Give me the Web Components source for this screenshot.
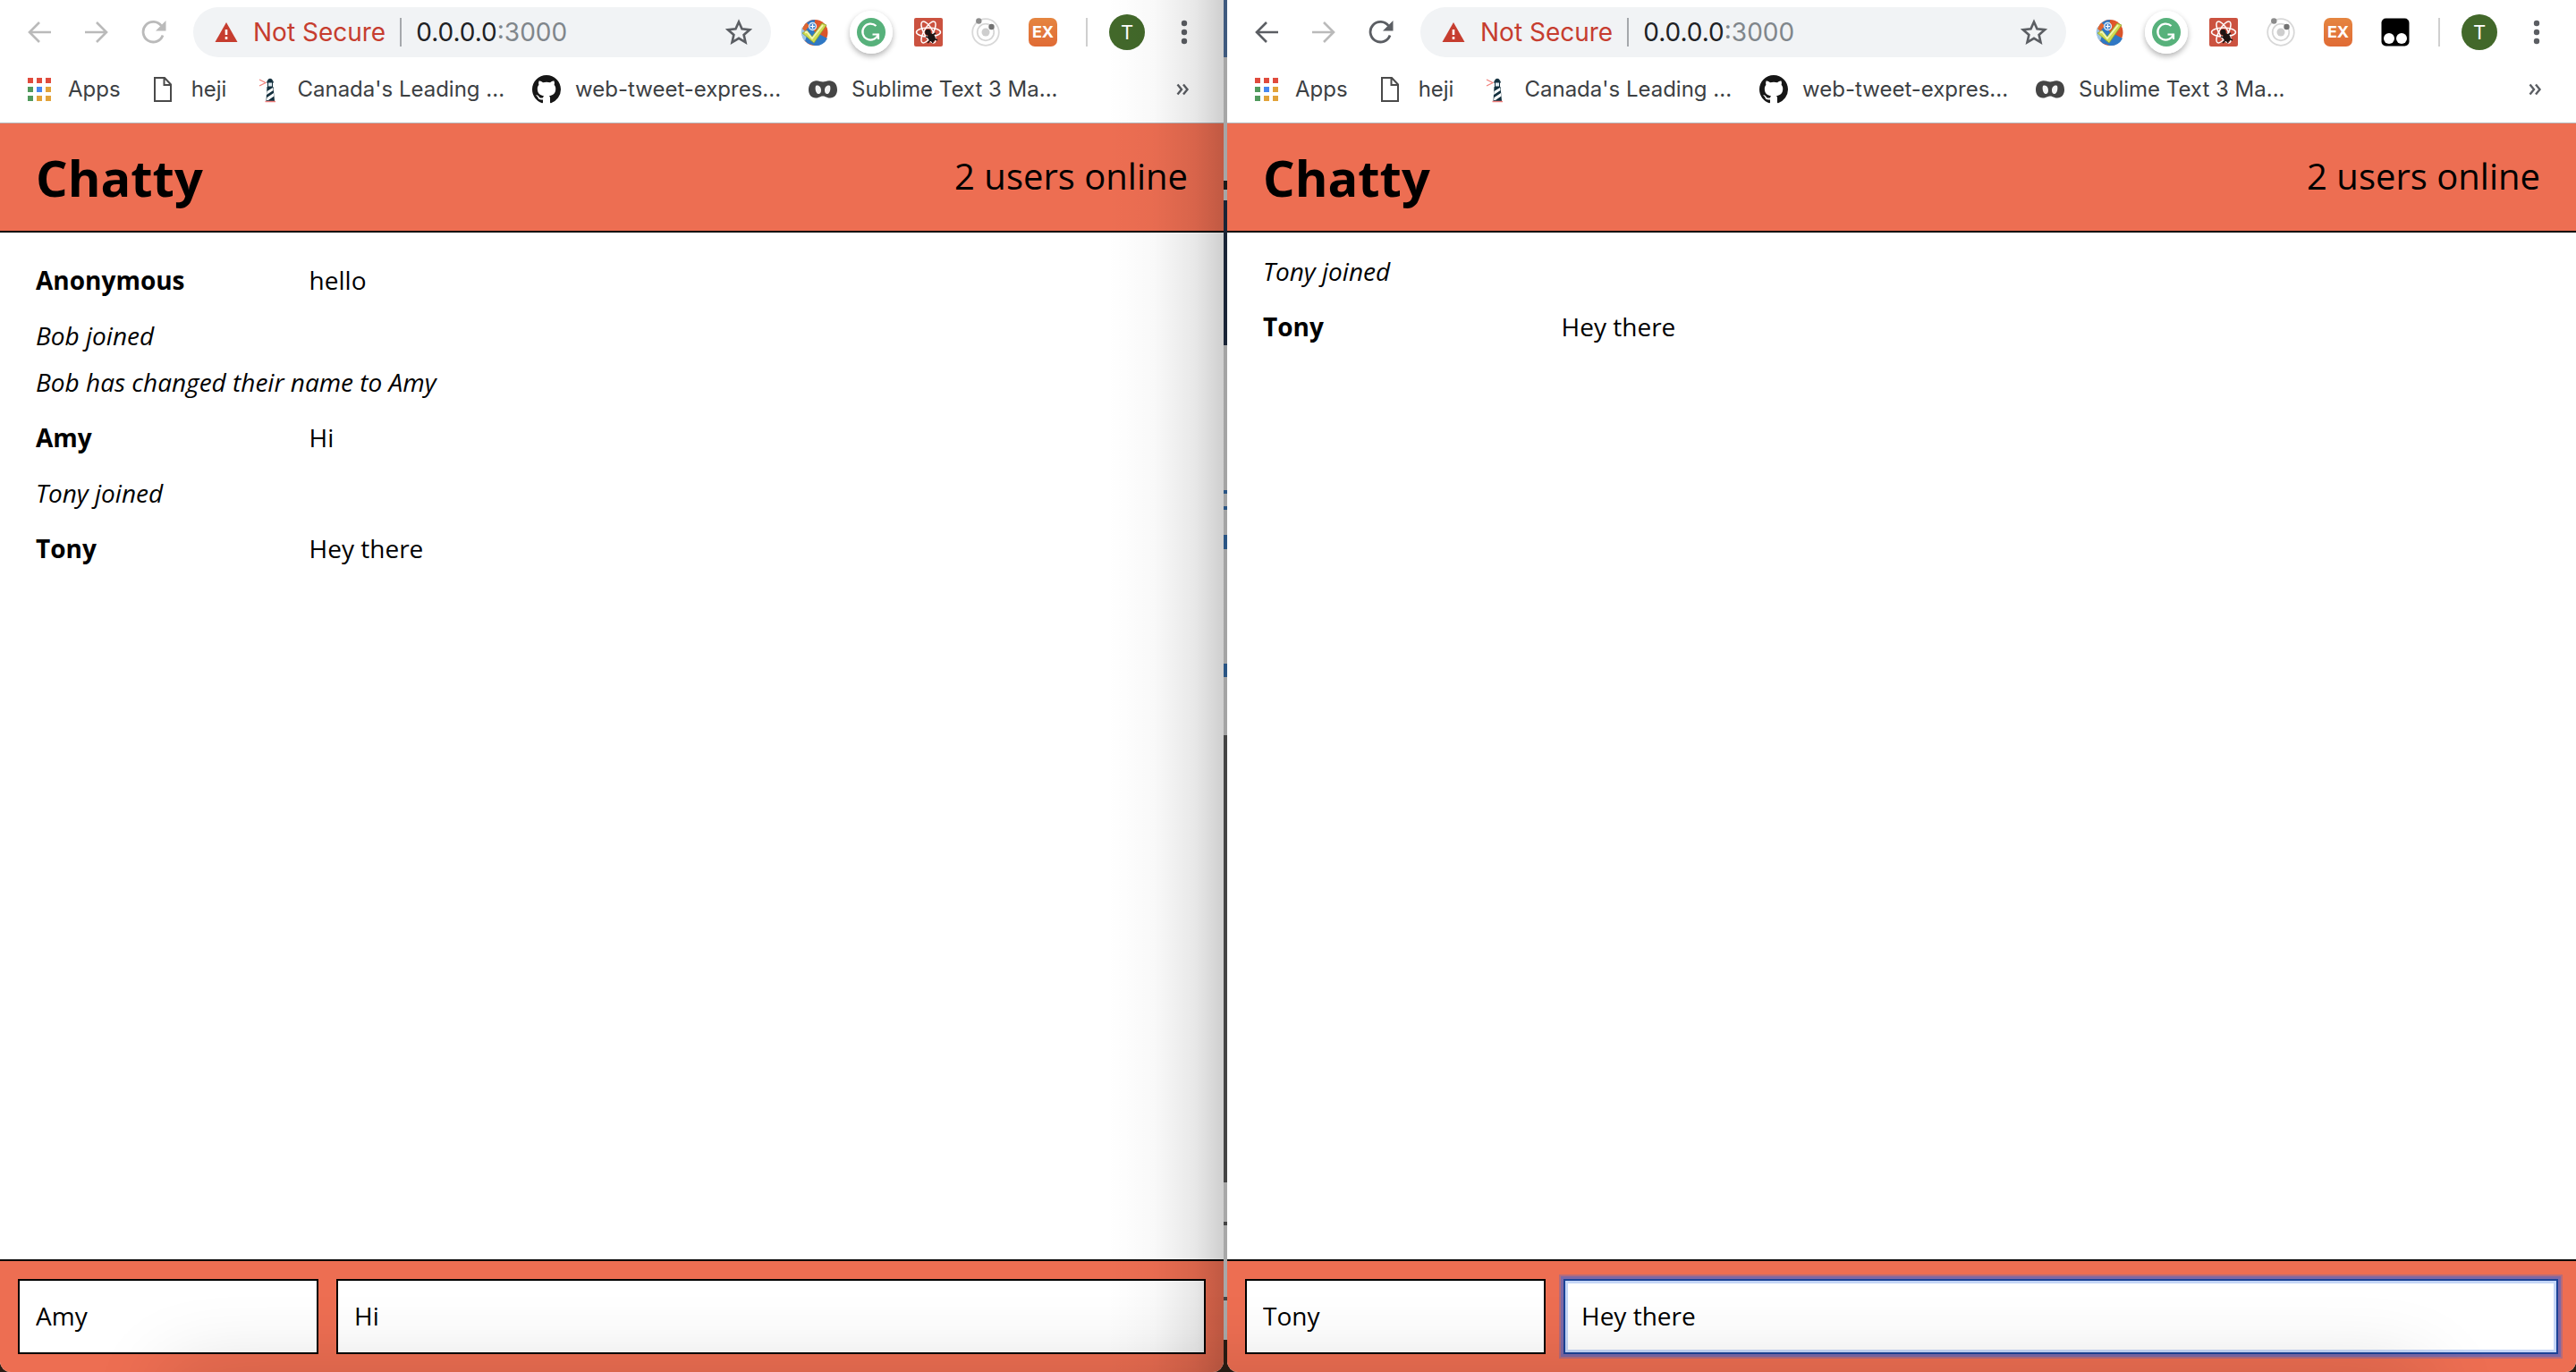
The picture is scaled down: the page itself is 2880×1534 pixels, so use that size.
<!DOCTYPE html>
<html lang="en">
<head>
<meta charset="utf-8">
<title>Chatty</title>
<style>
  html, body { height: 100%; margin: 0; }
  body { overflow: hidden; background: #2a1c14; }
</style>
</head>
<body>
<chat-desktop>
  <browser-window width-share="1368">
    <browser-toolbar slot="toolbar"></browser-toolbar>
    <bookmarks-bar slot="toolbar"></bookmarks-bar>
    <chat-app user="Amy" draft="Hi">
      <chat-message author="Anonymous">hello</chat-message>
      <chat-notice>Bob joined</chat-notice>
      <chat-notice>Bob has changed their name to Amy</chat-notice>
      <chat-message author="Amy">Hi</chat-message>
      <chat-notice>Tony joined</chat-notice>
      <chat-message author="Tony">Hey there</chat-message>
    </chat-app>
  </browser-window>
  <browser-window width-share="1508">
    <browser-toolbar slot="toolbar" active extra></browser-toolbar>
    <bookmarks-bar slot="toolbar"></bookmarks-bar>
    <chat-app user="Tony" draft="Hey there" typing>
      <chat-notice>Tony joined</chat-notice>
      <chat-message author="Tony">Hey there</chat-message>
    </chat-app>
  </browser-window>
</chat-desktop>

<script>
const ICONS = {
  back: [28, 28, '<path d="M27 14H3M14 3 3 14l11 11" fill="none" stroke="currentColor" stroke-width="2.6"/>'],
  forward: [28, 28, '<path d="M1 14h24M14 3l11 11-11 11" fill="none" stroke="currentColor" stroke-width="2.6"/>'],
  reload: [28, 28, '<path d="M24 17.500A11.300 11.300 0 1 1 22.500 7" fill="none" stroke="currentColor" stroke-width="2.800"/><path d="M27.500 1v11.500H16z" fill="currentColor"/>'],
  warning: [26, 24, '<path d="M13 1 25.500 23H.5z" fill="#c63d2f"/><path d="M11.700 9h2.600v6h-2.600zM11.700 17h2.600v3h-2.600z" fill="#fff"/>'],
  star: [30, 30, '<path d="m15 3.500 3.500 7.900 8.600.8-6.500 5.700 1.900 8.400L15 21.800l-7.500 4.500 1.900-8.400-6.500-5.700 8.600-.8z" fill="none" stroke="#5b5e63" stroke-width="2.600"/>'],
  check: [32, 32, '<circle cx="17" cy="16.500" r="14.500" fill="#d9542a"/><path d="M17 2a14.500 14.500 0 0 0-8 26.500L17 31a14 14 0 0 0 14-8L16 15z" fill="#2f78c4"/><path d="M21 2.800A14.500 14.500 0 0 1 31 13l-8 3-6-6z" fill="#e2572b"/><path d="M3 10a14 14 0 0 0 3 16l3-9z" fill="#9bc5e6"/><path d="M8 5.500A14.500 14.500 0 0 0 3 12l3 3 5-6z" fill="#e0652f"/><circle cx="14.500" cy="9.500" r="4" fill="#4f8bd0" stroke="#dbe9f6" stroke-width="1.400"/><path d="M14.500 7v5M12 9.500h5" stroke="#fff" stroke-width="1.200"/><path d="m3 17 5-3 6 7L25 6l5 2-14 20z" fill="#cfdc52" stroke="#8ba32f" stroke-width=".8"/><path d="m6 16.500 2-1 6 7.500L26 8" fill="none" stroke="#f0f5b4" stroke-width="2"/>'],
  grammarly: [48, 48, '<circle cx="24" cy="24" r="24" fill="#fff"/><circle cx="24" cy="24" r="16" fill="#57b17b"/><path d="M29.500 17A9 9 0 1 0 32 26" fill="none" stroke="#fff" stroke-width="2.300"/><path d="M25.500 26.500H32V32" fill="none" stroke="#fff" stroke-width="2.200"/>'],
  react: [32, 32, '<rect width="32" height="32" rx="2" fill="#cb5240"/><g fill="none" stroke="#fff" stroke-width="1.500"><ellipse cx="16" cy="16" rx="13.500" ry="5"/><ellipse cx="16" cy="16" rx="13.500" ry="5" transform="rotate(60 16 16)"/><ellipse cx="16" cy="16" rx="13.500" ry="5" transform="rotate(120 16 16)"/></g><circle cx="15.500" cy="16" r="3.300" fill="#1c1413"/><ellipse cx="19.500" cy="22" rx="4" ry="5" transform="rotate(-35 19.500 22)" fill="#1c1413"/><path d="m13 21 4 1m-2 6 3-3m3 3-1-3m6 0-4-2m2-6-3 2m-5-1 1 3" stroke="#1c1413" stroke-width="1.700"/>'],
  orbit: [32, 32, '<circle cx="16" cy="16" r="14.800" fill="none" stroke="#d8d8d8" stroke-width="1.800"/><circle cx="16" cy="16" r="9.300" fill="none" stroke="#d5d5d5" stroke-width="1.800"/><circle cx="16" cy="16" r="4.500" fill="#cecece"/><circle cx="8.300" cy="3.500" r="3.200" fill="#8c8c8c"/><circle cx="22.500" cy="10" r="3.200" fill="#737373"/>'],
  tamper: [32, 32, '<rect x=".5" y=".5" width="31" height="31" rx="5" fill="#000"/><circle cx="9" cy="23" r="6" fill="#fff"/><circle cx="23" cy="23" r="6" fill="#fff"/>'],
  dots: [8, 28, '<g fill="#5b5e63"><circle cx="4" cy="4" r="3.200"/><circle cx="4" cy="14" r="3.200"/><circle cx="4" cy="24" r="3.200"/></g>'],
  apps: [32, 32, '<g transform="translate(3 3)"><path d="M0 0h6v6H0zM10 0h6v6h-6zM20 0h6v6h-6z" fill="#e04b3d"/><path d="M0 10h6v6H0zM0 20h6v6H0z" fill="#519a5d"/><path d="M10 10h6v6h-6z" fill="#4688f1"/><path d="M20 10h6v6h-6zM10 20h6v6h-6zM20 20h6v6h-6z" fill="#e2a33a"/></g>'],
  file: [32, 32, '<path d="M7 3h11l7 7.500V29H7zM17.500 3v8H25" fill="none" stroke="#4a4a4a" stroke-width="2"/>'],
  lighthouse: [32, 32, '<path d="m6 5 7 3.500L6 12" fill="none" stroke="#f0807a" stroke-width="1.200"/><path d="M14 8h8M15 8c0-5 6-5 6 0" fill="#14303e" stroke="#14303e"/><path d="M15.500 8h5v5h-5z" fill="#dfeaf0" stroke="#14303e"/><path d="M14.500 13h7L23 29h-9.500z" fill="#14303e"/><path d="m14.500 18 6.500-4 .5 3-7.500 5zm0 7 7.500-5 .4 3.500L16 28l-2 0z" fill="#fff"/><path d="M12.500 29.500H24" stroke="#ef7f7c" stroke-width="1.500"/>'],
  github: [32, 32, '<path transform="scale(2)" fill="#161616" d="M8 0C3.580 0 0 3.580 0 8c0 3.540 2.290 6.530 5.470 7.590.4.070.55-.17.55-.38 0-.19-.01-.82-.01-1.490-2.010.37-2.530-.49-2.690-.94-.09-.23-.48-.94-.82-1.130-.28-.15-.68-.52-.01-.53.63-.01 1.080.58 1.230.82.72 1.210 1.870.87 2.330.66.07-.52.28-.87.51-1.070-1.780-.2-3.640-.89-3.640-3.950 0-.87.31-1.590.82-2.150-.08-.2-.36-1.020.08-2.120 0 0 .67-.21 2.200.82.64-.18 1.320-.27 2-.27s1.360.09 2 .27c1.530-1.040 2.200-.82 2.200-.82.44 1.100.16 1.920.08 2.120.51.56.82 1.270.82 2.150 0 3.070-1.870 3.750-3.650 3.950.29.25.54.73.54 1.480 0 1.070-.01 1.930-.01 2.200 0 .21.15.46.55.38A8.010 8.010 0 0 0 16 8c0-4.420-3.580-8-8-8z"/>'],
  mask: [32, 32, '<path d="M7 6.500c4-1 6 1 9 1s5-2 9-1c5 1 7 5 7 10s-3 9-8 9c-4 0-5-2-8-2s-4 2-8 2c-5 0-8-4-8-9s2-9 7-10z" fill="#454545"/><path d="M8 12c3-1.500 6 1 6 5 0 3-1.500 4.500-3.500 4-2.500-1-3.500-6-2.500-9zM24 12c-3-1.500-6 1-6 5 0 3 1.500 4.500 3.500 4 2.500-1 3.500-6 2.500-9z" fill="#f4f4f4"/>'],
  more: [18, 14, '<path d="m1.500 1.500 4.500 5.500-4.500 5.500M8 1.500 12.500 7 8 12.500" fill="none" stroke="#5b5e63" stroke-width="2.400"/>']
};

class ShadowElement extends HTMLElement {
  connectedCallback() {
    if (this.shadowRoot) return;
    this.attachShadow({ mode: 'open' }).innerHTML = this.render();
  }
}

/* One drawing from the icon table. */
customElements.define('app-icon', class extends ShadowElement {
  render() {
    const [w, h, body] = ICONS[this.getAttribute('name')];
    return `<style>:host{display:block;flex:none}svg{display:block}</style>
      <svg width="${w}" height="${h}" viewBox="0 0 ${w} ${h}" aria-hidden="true">${body}</svg>`;
  }
});

/* Two windows side by side, with a sliver of what lies behind between them. */
customElements.define('chat-desktop', class extends ShadowElement {
  render() {
    return `<style>
      :host{display:flex;gap:4px;height:100vh;min-height:600px;position:relative;overflow:hidden;
        background:linear-gradient(#3f5a7e 0 64px,#a6a6a6 64px 202px,#1b1b1b 202px 212px,#a6a6a6 212px 224px,
          #1a2436 224px 386px,#a4a4a4 386px 548px,#2a5584 548px 552px,#a4a4a4 552px 566px,#2a5584 566px 570px,
          #a4a4a4 570px 598px,#2a5584 598px 614px,#a4a4a4 614px 742px,#2a5584 742px 757px,#a4a4a4 757px 822px,
          #444 822px 1322px,#a8a8a8 1322px 1366px,#444 1366px 1370px,#a8a8a8 1370px 1450px,#444 1450px 1454px,
          #a8a8a8 1454px 1498px,#2a1c14 1498px)}
      :host::after{content:"";position:absolute;left:190px;right:170px;top:100%;height:80px;
        box-shadow:0 0 90px rgba(0,0,0,.16);pointer-events:none}
    </style><slot></slot>`;
  }
});

customElements.define('browser-window', class extends ShadowElement {
  render() {
    return `<style>
      :host{display:flex;flex-direction:column;flex:${this.getAttribute('width-share')} 1 0;min-width:0;
        position:relative;overflow:hidden;background:#fff;border-radius:0 0 12px 12px}
      :host(:first-of-type)::after{content:"";position:absolute;inset:0 0 0 auto;width:130px;pointer-events:none;
        background:linear-gradient(to right,transparent,rgba(0,0,0,.025) 40%,rgba(0,0,0,.09) 75%,rgba(0,0,0,.19))}
      header{flex:none;border-bottom:1px solid #b4b6ba}
      ::slotted(chat-app){flex:1;min-height:0}
    </style><header><slot name="toolbar"></slot></header><slot></slot>`;
  }
});

customElements.define('browser-toolbar', class extends ShadowElement {
  render() {
    const ext = (n, label) => `<button aria-label="${label}"><app-icon name="${n}"></app-icon></button>`;
    const on = this.hasAttribute('active') ? 'on' : '';
    return `<style>
      :host{display:flex;align-items:center;height:56px;padding:8px 12px;font:28px/36px Inter,sans-serif}
      button{display:flex;align-items:center;justify-content:center;flex:none;width:64px;height:56px;
        padding:0;border:0;background:none;font:inherit;color:#bababa}
      button.on{color:#5b5e63}
      .address{display:flex;align-items:center;flex:1;min-width:0;height:56px;margin:0 16px 0 12px;
        padding:0 6px 0 24px;box-sizing:border-box;border-radius:28px;background:#f1f3f5}
      .address button{width:auto;gap:17px;color:#c63d2f}
      .address .star{width:60px}
      i{flex:none;width:2px;height:32px;background:#a5a8ac}
      .address i{margin:0 16px 0 16px}
      .url{flex:1;color:#202124;outline:0;white-space:nowrap}
      .url span{color:#80868b}
      .g app-icon{border-radius:50%;box-shadow:0 3px 6px rgba(0,0,0,.3)}
      .ex{width:32px;height:32px;border-radius:7px;background:linear-gradient(#e58540,#e06b35);
        color:#fff;font:bold 18px/32px Inter,sans-serif;text-align:center}
      .rule{margin:0 24px 0 16px;background:#cfcfcf}
      .avatar{width:40px;height:40px;margin-right:12px;border-radius:50%;background:#42682a;color:#fff;font-size:22px}
    </style>
    <button class="${on}" aria-label="Back"><app-icon name="back"></app-icon></button>
    <button aria-label="Forward"><app-icon name="forward"></app-icon></button>
    <button class="${on}" aria-label="Reload"><app-icon name="reload"></app-icon></button>
    <div class="address">
      <button><app-icon name="warning"></app-icon>Not Secure</button><i></i>
      <div class="url" role="textbox" contenteditable="true" spellcheck="false" aria-label="Address">0.0.0.0<span>:3000</span></div>
      <button class="star" aria-label="Bookmark this page"><app-icon name="star"></app-icon></button>
    </div>
    ${ext('check', 'Checker')}
    <button class="g" aria-label="Grammarly"><app-icon name="grammarly"></app-icon></button>
    ${ext('react', 'React tools')}${ext('orbit', 'Orbit')}
    <button><span class="ex">EX</span></button>
    ${this.hasAttribute('extra') ? ext('tamper', 'Tampermonkey') : ''}
    <i class="rule"></i>
    <button class="avatar">T</button>
    <button aria-label="Menu"><app-icon name="dots"></app-icon></button>`;
  }
});

customElements.define('bookmarks-bar', class extends ShadowElement {
  render() {
    const items = [['apps', 'Apps'], ['file', 'heji'], ['lighthouse', "Canada's Leading ..."],
      ['github', 'web-tweet-expres...'], ['mask', 'Sublime Text 3 Ma...']];
    return `<style>
      :host{display:flex;align-items:center;gap:31px;height:56px;padding:0 12px 9px 28px;
        font:24px/32px Inter,sans-serif}
      a{display:flex;align-items:center;gap:16px;flex:none;color:#3c4043;text-decoration:none;white-space:nowrap}
      button{display:flex;align-items:center;justify-content:center;width:64px;height:40px;margin-left:auto;
        padding:0;border:0;background:none}
    </style>
    ${items.map(([i, t]) => `<a href="#"><app-icon name="${i}"></app-icon><span>${t}</span></a>`).join('')}
    <button aria-label="More bookmarks"><app-icon name="more"></app-icon></button>`;
  }
});

customElements.define('chat-app', class extends ShadowElement {
  render() {
    return `<style>
      :host{display:flex;flex-direction:column;font:28px/40px "Open Sans",sans-serif;color:#000}
      header{display:flex;align-items:center;justify-content:space-between;flex:none;height:120px;padding:0 40px;
        background:#ed6e52;border-bottom:2px solid #000}
      h1{margin:0;font-size:56px;line-height:76px}
      header span{padding-bottom:2px;font-size:40px;line-height:56px}
      main{flex:1;min-height:0;overflow:hidden;padding:17px 40px;background:#fff}
      form{display:flex;gap:20px;flex:none;padding:20px;background:#ed6e52;border-top:2px solid #000}
      input{box-sizing:border-box;height:84px;padding:0 18px 2px;border:2px solid #000;border-radius:0;background:#fff;
        font:inherit;color:inherit;outline:0;min-width:0}
      .name{flex:0 0 336px}
      .text{flex:1}
      :host([typing]) .text,input:focus{border-color:#1c4397;
        box-shadow:0 0 0 3px #7c68a6,0 0 0 5px rgba(124,104,166,.5),inset 0 0 0 3px #c5d6f7}
    </style>
    <header><h1>Chatty</h1><span>2 users online</span></header>
    <main><slot></slot></main>
    <form>
      <input class="name" aria-label="Your name" value="${this.getAttribute('user')}">
      <input class="text" aria-label="Message" value="${this.getAttribute('draft')}">
    </form>`;
  }
});

customElements.define('chat-message', class extends ShadowElement {
  render() {
    return `<style>:host{display:grid;grid-template-columns:20% 1fr;column-gap:48px;padding:16px 0}</style>
      <b>${this.getAttribute('author')}</b><span><slot></slot></span>`;
  }
});

customElements.define('chat-notice', class extends ShadowElement {
  render() {
    return `<style>:host{display:block;padding:6px 0;font-style:italic}</style><slot></slot>`;
  }
});
</script>
</body>
</html>
